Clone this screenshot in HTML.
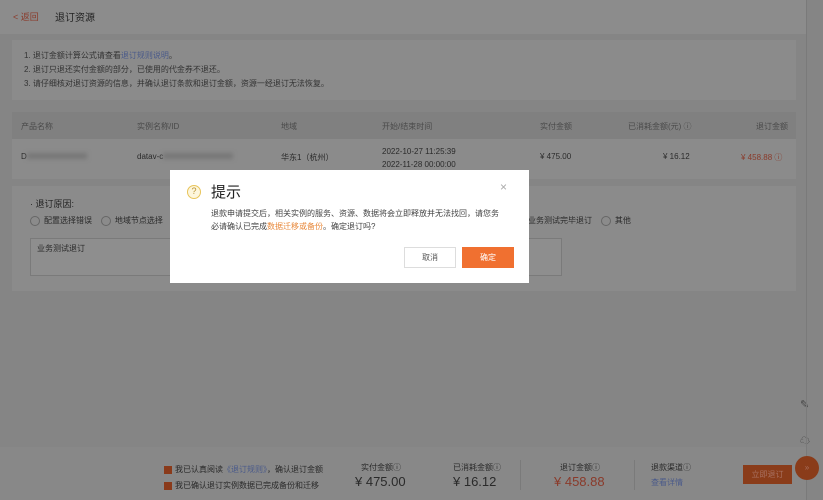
<!DOCTYPE html>
<html><head><meta charset="utf-8"><style>
*{margin:0;padding:0;box-sizing:border-box}
body{width:823px;height:500px;overflow:hidden;background:#858585;font-family:"Liberation Sans","Noto Sans CJK SC",sans-serif;font-size:8px;color:#2a2a2a;position:relative}
.a{position:absolute;white-space:nowrap}
.p{position:absolute;background:#8b8b8b}
</style></head><body>
<div class="p" style="left:0;top:0;width:806px;height:34px;background:#8c8c8c"></div>
<div class="a" style="left:13px;top:10px;color:#8a3a2a;font-size:9px">&lt; 返回</div>
<div class="a" style="left:55px;top:9px;font-size:10px;color:#222">退订资源</div>
<div class="p" style="left:12px;top:40px;width:784px;height:60px"></div>
<div class="a" style="left:24px;top:49px;line-height:14px;color:#333">1. 退订金额计算公式请查看<span style="color:#4a5a8a">退订规则说明</span>。<br>2. 退订只退还实付金额的部分，已使用的代金券不退还。<br>3. 请仔细核对退订资源的信息，并确认退订条款和退订金额，资源一经退订无法恢复。</div>
<div class="p" style="left:12px;top:112px;width:784px;height:27px;background:#808080"></div>
<div class="p" style="left:12px;top:139px;width:784px;height:40px"></div>
<div class="a" style="left:21px;top:121px;color:#4a4a4a">产品名称</div>
<div class="a" style="left:137px;top:121px;color:#4a4a4a">实例名称/ID</div>
<div class="a" style="left:281px;top:121px;color:#4a4a4a">地域</div>
<div class="a" style="left:382px;top:121px;color:#4a4a4a">开始/结束时间</div>
<div class="a" style="left:540px;top:121px;color:#4a4a4a">实付金额</div>
<div class="a" style="left:628px;top:121px;color:#4a4a4a">已消耗金额(元) ⓘ</div>
<div class="a" style="left:756px;top:121px;color:#4a4a4a">退订金额</div>
<div class="a" style="left:21px;top:152px">D<span style="display:inline-block;width:60px;height:6px;background:#777;filter:blur(2px)"></span></div>
<div class="a" style="left:137px;top:152px">datav-c<span style="display:inline-block;width:70px;height:6px;background:#777;filter:blur(2px)"></span></div>
<div class="a" style="left:281px;top:152px">华东1（杭州）</div>
<div class="a" style="left:382px;top:145px;line-height:13px">2022-10-27 11:25:39<br>2022-11-28 00:00:00</div>
<div class="a" style="left:540px;top:152px">¥ 475.00</div>
<div class="a" style="left:663px;top:152px">¥ 16.12</div>
<div class="a" style="left:741px;top:152px;color:#8a3a2a">¥ 458.88 ⓘ</div>
<div class="p" style="left:12px;top:186px;width:784px;height:105px"></div>
<div class="a" style="left:30px;top:197px;font-size:9px;color:#222">· 退订原因:</div>
<div class="a" style="left:30px;top:215px"><span style="display:inline-block;width:10px;height:10px;border:1px solid #666;border-radius:50%;vertical-align:middle;margin-right:4px"></span>配置选择错误 &nbsp;&nbsp; <span style="display:inline-block;width:10px;height:10px;border:1px solid #666;border-radius:50%;vertical-align:middle;margin-right:4px"></span>地域节点选择</div>
<div class="a" style="left:528px;top:215px">业务测试完毕退订 &nbsp;&nbsp; <span style="display:inline-block;width:10px;height:10px;border:1px solid #666;border-radius:50%;vertical-align:middle;margin-right:4px"></span>其他</div>
<div class="a" style="left:30px;top:238px;width:532px;height:38px;border:1px solid #7a7a7a;background:#8e8e8e;padding:4px 6px">业务测试退订</div>
<div class="a" style="left:800px;top:398px;color:#444;font-size:11px">✎</div>
<div class="a" style="left:800px;top:432px;color:#444;font-size:10px">☁</div>
<div class="p" style="left:0;top:447px;width:806px;height:53px;background:#888"></div>
<div class="a" style="left:806px;top:0;width:1px;height:500px;background:#7a7a7a"></div>
<div class="a" style="left:164px;top:462px;line-height:16px"><span style="display:inline-block;width:8px;height:8px;background:#8a3a1a;vertical-align:middle;margin-right:3px"></span>我已认真阅读<span style="color:#4a5a8a">《退订规则》</span>，确认退订金额<br><span style="display:inline-block;width:8px;height:8px;background:#8a3a1a;vertical-align:middle;margin-right:3px"></span>我已确认退订实例数据已完成备份和迁移</div>
<div class="a" style="left:361px;top:462px">实付金额ⓘ</div>
<div class="a" style="left:355px;top:474px;font-size:13px">¥ 475.00</div>
<div class="a" style="left:453px;top:462px">已消耗金额ⓘ</div>
<div class="a" style="left:453px;top:474px;font-size:13px">¥ 16.12</div>
<div class="a" style="left:560px;top:462px">退订金额ⓘ</div>
<div class="a" style="left:554px;top:474px;font-size:13px;color:#8a3a2a">¥ 458.88</div>
<div class="a" style="left:520px;top:460px;width:1px;height:30px;background:#7a7a7a"></div>
<div class="a" style="left:634px;top:460px;width:1px;height:30px;background:#7a7a7a"></div>
<div class="a" style="left:651px;top:462px">退款渠道ⓘ</div>
<div class="a" style="left:651px;top:477px;color:#4a5a8a">查看详情</div>
<div class="a" style="left:743px;top:465px;width:49px;height:19px;background:#8a3c1a;color:#a87060;text-align:center;line-height:19px">立即退订</div>
<div class="a" style="left:795px;top:456px;width:24px;height:24px;border-radius:50%;background:#8a3c1a;color:#a87060;text-align:center;line-height:24px">»</div>
<div class="a" style="left:170px;top:170px;width:359px;height:113px;background:#fff"></div>
<div class="a" style="left:187px;top:185px;width:14px;height:14px;border-radius:50%;border:1.5px solid #e8c45a;background:#fdf6dc;color:#b89030;font-size:9px;text-align:center;line-height:11px">?</div>
<div class="a" style="left:211px;top:181px;font-size:15px;color:#222">提示</div>
<div class="a" style="left:500px;top:180px;font-size:12px;color:#aaa">×</div>
<div class="a" style="left:211px;top:207px;line-height:13px;color:#444">退款申请提交后，相关实例的服务、资源、数据将会立即释放并无法找回，请您务<br>必请确认已完成<span style="color:#e8883a">数据迁移或备份</span>。确定退订吗?</div>
<div class="a" style="left:404px;top:247px;width:52px;height:21px;border:1px solid #ddd;text-align:center;line-height:19px;color:#555">取消</div>
<div class="a" style="left:462px;top:247px;width:52px;height:21px;background:#f07030;text-align:center;line-height:21px;color:#fff">确定</div>
</body></html>
